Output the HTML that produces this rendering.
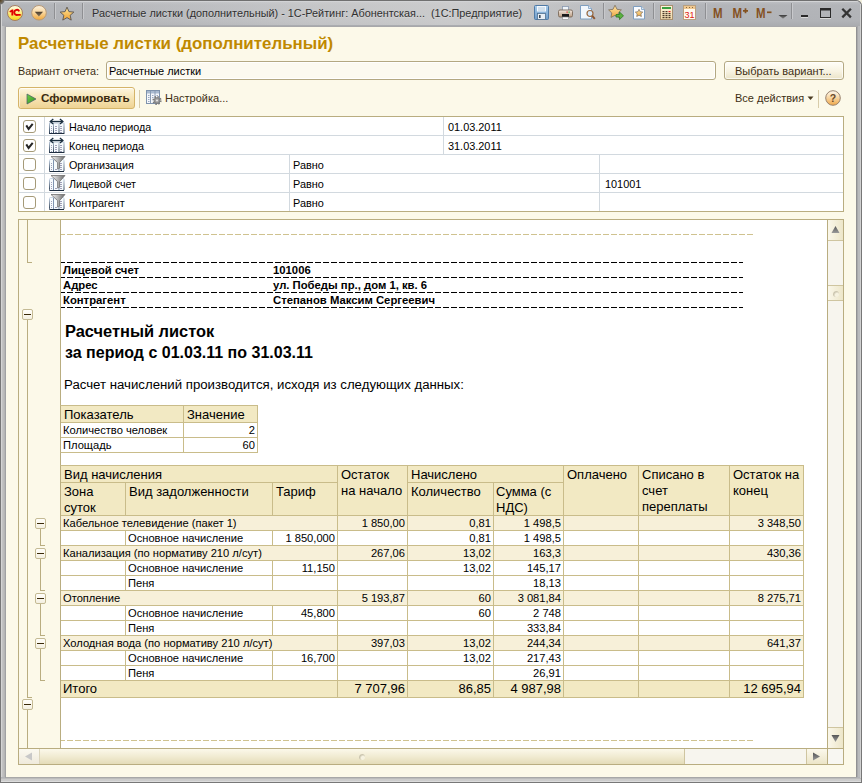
<!DOCTYPE html>
<html><head><meta charset="utf-8">
<style>
*{margin:0;padding:0;box-sizing:border-box}
html,body{width:862px;height:783px;overflow:hidden;background:#f3f0de;font-family:"Liberation Sans",sans-serif}
.a{position:absolute}
.t{position:absolute;white-space:nowrap;font-family:"Liberation Sans",sans-serif;font-size:11px;line-height:13px;color:#000}
#frame{left:0;top:0;width:862px;height:783px;background:#ababab;border-left:1px solid #707070;border-top:1px solid #707070;border-right:1px solid #8a8a8a;border-bottom:1px solid #8a8a8a;border-radius:6px 6px 0 0}
#tbar{left:1px;top:1px;width:860px;height:25px;background:linear-gradient(#d4d5d7 0,#d4d5d7 1px,#bfc1c5 2px,#b4b6ba 5px,#b1b3b7 70%,#aeb0b4 100%);border-radius:5px 5px 0 0}
#client{left:5px;top:26px;width:852px;height:752px;border:1px solid #8c8c8c;background:#fcf9e9}
.sep{position:absolute;width:1px;background:#9a9a9a;border-right:1px solid #cfcfcf}
.hl{position:absolute;height:1px}
.vl{position:absolute;width:1px}
</style></head><body>
<div class="a" style="left:0;top:0;width:862px;height:783px;background:#b1b3b7;border-radius:6px 6px 0 0"></div>
<div class="a" style="left:0;top:0;width:862px;height:783px;border-top:1px solid #707070;border-left:1px solid #777;border-right:1px solid #777;border-bottom:1px solid #777;border-radius:6px 6px 0 0"></div>
<div class="a" style="left:1px;top:1px;width:860px;height:25px;border-radius:5px 5px 0 0;background:linear-gradient(#d2d3d5 0,#d2d3d5 1px,#bcbec2 1px,#b3b5b9 4px,#b1b3b7 20px,#a9abaf 25px)"></div>
<div class="a" style="left:60px;top:2px;width:620px;height:23px;background:linear-gradient(90deg,rgba(212,212,212,0) 0,rgba(212,212,212,.55) 250px,rgba(210,210,210,.75) 390px,rgba(210,210,210,.55) 470px,rgba(212,212,212,0) 620px)"></div>
<div class="a" style="left:1px;top:4px;width:1px;height:773px;background:#d4d4d4"></div>
<div class="a" style="left:2px;top:26px;width:1px;height:751px;background:#c2c2c2"></div>
<div class="a" style="left:3px;top:26px;width:1px;height:751px;background:#bdbdbd"></div>
<div class="a" style="left:4px;top:26px;width:1px;height:751px;background:#b5b5b5"></div>
<div class="a" style="left:5px;top:26px;width:1px;height:752px;background:#a0a1a3"></div>
<div class="a" style="left:856px;top:26px;width:1px;height:752px;background:#909092"></div>
<div class="a" style="left:857px;top:26px;width:1px;height:751px;background:#a8a9ab"></div>
<div class="a" style="left:858px;top:26px;width:2px;height:751px;background:#b9babc"></div>
<div class="a" style="left:860px;top:4px;width:1px;height:778px;background:#d0d0d0"></div>
<div class="a" style="left:5px;top:26px;width:852px;height:1px;background:#a8a8aa"></div>
<div class="a" style="left:6px;top:777px;width:851px;height:1px;background:#a8a8a8"></div>
<div class="a" style="left:1px;top:778px;width:860px;height:1px;background:#bcbcbc"></div>
<div class="a" style="left:1px;top:779px;width:860px;height:2px;background:#cccccc"></div>
<div class="a" style="left:1px;top:781px;width:860px;height:1px;background:#dcdcdc"></div>
<div class="a" style="left:6px;top:27px;width:850px;height:750px;background:#fcf9e9"></div>
<div class="a" style="left:0;top:0;width:5px;height:5px;background:radial-gradient(circle at 0 0,#4a3a20 0,#6a5a40 2px,#707070 4px,transparent 5px)"></div>

<!-- title bar icons -->
<svg class="a" style="left:0;top:0" width="862" height="26">
  <defs>
    <linearGradient id="g1c" x1="0" y1="0" x2="0" y2="1"><stop offset="0" stop-color="#fffdf0"/><stop offset="0.45" stop-color="#fdf08a"/><stop offset="1" stop-color="#f6d410"/></linearGradient>
    <linearGradient id="gdd" x1="0" y1="0" x2="0" y2="1"><stop offset="0" stop-color="#fdf3e0"/><stop offset=".5" stop-color="#f8d49a"/><stop offset="1" stop-color="#f2a838"/></linearGradient><linearGradient id="gddt" x1="0" y1="0" x2="0" y2="1"><stop offset="0" stop-color="#4a3c2c"/><stop offset="1" stop-color="#8a7a60"/></linearGradient>
    <linearGradient id="gst" x1="0" y1="0" x2="0" y2="1"><stop offset="0" stop-color="#ffe79a"/><stop offset="1" stop-color="#f0a030"/></linearGradient>
  </defs>
  <circle cx="15" cy="13" r="7.5" fill="url(#g1c)" stroke="#a57d60" stroke-width="1"/>
  <path d="M9.3 11.2l2.6-1.6h1.4v5.9h-1.9v-3.6l-1.4.7z" fill="#e00000"/>
  <path d="M19.2 11.3a2.6 2.6 0 1 0 -1.6 3.6h3.1" fill="none" stroke="#e00000" stroke-width="1.9"/>
  <circle cx="39" cy="12.8" r="7.3" fill="url(#gdd)" stroke="#b89a78" stroke-width="1"/>
  <path d="M34.8 11.8 h8.2 l-4.1 4.8z" fill="url(#gddt)"/>
  <path d="M67.00 7.10 L68.94 11.63 L73.85 12.08 L70.14 15.32 L71.23 20.12 L67.00 17.60 L62.77 20.12 L63.86 15.32 L60.15 12.08 L65.06 11.63Z" fill="url(#gst)" stroke="#5a5550" stroke-width=".9" stroke-linejoin="round"/>
  <rect x="54" y="3" width="1" height="16" fill="#8e8f92"/><rect x="55" y="3" width="1" height="16" fill="#c8c9cc"/>
  <rect x="82" y="3" width="1" height="16" fill="#8e8f92"/><rect x="83" y="3" width="1" height="16" fill="#c8c9cc"/>
</svg>
<div class="t" style="left:92px;top:6.6px;font-size:10.86px;color:#303030;text-shadow:0 1px 0 rgba(255,255,255,.25)">Расчетные листки (дополнительный) - 1С-Рейтинг: Абонентская...&nbsp; (1С:Предприятие)</div>


<div class="t" style="left:18px;top:35px;font-size:16.9px;line-height:18px;font-weight:700;color:#c08900">Расчетные листки (дополнительный)</div>
<div class="t" style="left:18px;top:65px;font-size:10.8px;color:#3e2f14">Вариант отчета:</div>
<div class="a" style="left:106px;top:61px;width:610px;height:19px;border:1px solid #b3a882;border-radius:3px;background:#fcfaf0;box-shadow:inset 0 0 0 1px #fff"></div>
<div class="t" style="left:109px;top:65px;color:#000">Расчетные листки</div>
<div class="a" style="left:724px;top:61px;width:120px;height:19px;border:1px solid #b3a882;border-radius:3px;background:linear-gradient(#fffef8,#f7f3e2 55%,#ebe4c8);box-shadow:inset 0 0 0 1px rgba(255,255,255,.7)"></div>
<div class="t" style="left:735px;top:65px;color:#3e2f14">Выбрать вариант...</div>
<div class="a" style="left:18px;top:87px;width:117px;height:22px;border:1px solid #d5b469;border-radius:3px;background:linear-gradient(#fdf6e0,#f7e6b8 45%,#efd394);box-shadow:inset 0 1px 0 #fffdf6,inset 1px 0 0 rgba(255,255,255,.5)"></div>
<svg class="a" style="left:26px;top:92.5px" width="11" height="12"><defs><linearGradient id="gpl" x1="0" y1="0" x2="1" y2="1"><stop offset="0" stop-color="#6fcf4a"/><stop offset="1" stop-color="#2e8f1e"/></linearGradient></defs><path d="M1 1 L10 6 L1 11Z" fill="url(#gpl)" stroke="#4a5a6a" stroke-width=".7"/></svg>
<div class="t" style="left:41px;top:91px;font-weight:700;font-size:11.65px;color:#3a2a10">Сформировать</div>
<div class="a" style="left:139px;top:90px;width:1px;height:18px;background:#d8ccaa"></div>
<svg class="a" style="left:146px;top:89px" width="17" height="17">
 <rect x="0.5" y="1.5" width="13" height="13" fill="#f4f7fb" stroke="#7f93ad"/>
 <rect x="1" y="2" width="12" height="2.5" fill="#a9bad0"/>
 <path d="M4.5 2v12M9 2v12" stroke="#8a9cb4"/>
 <path d="M2 6.5h1.5M2 8.5h1.5M2 10.5h1.5M2 12.5h1.5M6 6.5h1.5M6 8.5h1.5M10.5 6.5h1.5" stroke="#9aa8c0"/>
 <circle cx="11" cy="11.5" r="3.6" fill="none" stroke="#7a7a7a" stroke-width="2" stroke-dasharray="1.4 1.43"/>
 <circle cx="11" cy="11.5" r="2.9" fill="#9c9c9c" stroke="#6e6e6e" stroke-width=".6"/>
 <circle cx="11" cy="11.5" r="1.1" fill="#e4e4e4"/>
</svg>
<div class="t" style="left:165px;top:92px;color:#3e2f14">Настройка...</div>
<div class="t" style="left:735px;top:92px;color:#3e2f14">Все действия</div>
<svg class="a" style="left:807px;top:96px" width="7" height="5"><path d="M0.5 0.5h6l-3 3.5z" fill="#4a3b20"/></svg>
<div class="a" style="left:818px;top:90px;width:1px;height:18px;background:#d8ccaa"></div>
<svg class="a" style="left:824px;top:89px" width="18" height="18"><defs><linearGradient id="ghp" x1="0" y1="0" x2="0" y2="1"><stop offset="0" stop-color="#fffaf0"/><stop offset=".45" stop-color="#f8d8a8"/><stop offset="1" stop-color="#f0a848"/></linearGradient></defs><circle cx="9" cy="9" r="7.3" fill="url(#ghp)" stroke="#9a8470" stroke-width="1"/><text x="9" y="12.8" text-anchor="middle" font-family="Liberation Sans" font-weight="700" font-size="10.5" fill="#6a4a2a">?</text></svg>



<svg class="a" style="left:520px;top:0" width="342" height="26">
<defs>
 <linearGradient id="tflop" x1="0" y1="0" x2="0" y2="1"><stop offset="0" stop-color="#a8cbea"/><stop offset="1" stop-color="#6f9cc8"/></linearGradient>
 <linearGradient id="tprn" x1="0" y1="0" x2="0" y2="1"><stop offset="0" stop-color="#f3e9e0"/><stop offset="1" stop-color="#b89a80"/></linearGradient>
 <linearGradient id="tstar" x1="0" y1="0" x2="0" y2="1"><stop offset="0" stop-color="#ffe8a8"/><stop offset="1" stop-color="#eea640"/></linearGradient>
 <linearGradient id="tcalc" x1="0" y1="0" x2="0" y2="1"><stop offset="0" stop-color="#fff4dc"/><stop offset="1" stop-color="#f0d8a8"/></linearGradient>
 <linearGradient id="tarr" x1="0" y1="0" x2="0" y2="1"><stop offset="0" stop-color="#3a3a3a"/><stop offset="1" stop-color="#8a8a8a"/></linearGradient>
</defs>
<!-- floppy 534..549 -->
<g transform="translate(14,0)">
 <rect x="0.5" y="5.5" width="14" height="14" rx="1" fill="url(#tflop)" stroke="#4f7aa6"/>
 <rect x="3" y="6" width="9" height="5.5" fill="#f4f8fc"/>
 <path d="M4 8h7M4 10h7" stroke="#9fbcd8" stroke-width=".8"/>
 <rect x="3.5" y="13.5" width="8" height="6" fill="#e8eef4" stroke="#4f6f90" stroke-width=".8"/>
 <rect x="5" y="15" width="1.6" height="3" fill="#3a4a5a"/>
</g>
<!-- printer 558..573 -->
<g transform="translate(38,0)">
 <rect x="4.5" y="6.5" width="6" height="4" fill="#eef4fa" stroke="#8a9ab0" stroke-width=".8"/>
 <rect x="0.5" y="10" width="14" height="7" rx="1.5" fill="url(#tprn)" stroke="#7a6a5a" stroke-width=".9"/>
 <rect x="8.5" y="11.5" width="1.2" height="1.2" fill="#e02020"/><rect x="10.5" y="11.5" width="1.2" height="1.2" fill="#20b020"/>
 <rect x="4" y="14" width="7" height="3" fill="#1a1a1a"/>
 <rect x="4.5" y="17" width="6" height="2.5" fill="#fafafa" stroke="#8a8a8a" stroke-width=".6"/>
</g>
<!-- preview 580..595 -->
<g transform="translate(60,0)">
 <path d="M0.5 5.5h8l3 3v10.5h-11z" fill="#f2f7fc" stroke="#7f9fc0"/>
 <path d="M8.5 5.5v3h3" fill="#dce8f4" stroke="#7f9fc0" stroke-width=".8"/>
 <circle cx="10" cy="13.5" r="3" fill="#d4e6f8" stroke="#9a6a40" stroke-width="1.2"/>
 <path d="M12.2 15.8l2.6 3" stroke="#8a5530" stroke-width="2"/>
</g>
<rect x="83" y="3" width="1" height="16" fill="#8e8f92"/><rect x="84" y="3" width="1" height="16" fill="#c8c9cc"/>
<!-- star arrow 608..624 -->
<g transform="translate(88,0)">
 <path d="M7 5.2l2 4.1 4.4.6-3.2 3.1.8 4.4L7 15.3l-4 2.1.8-4.4L.6 9.9 5 9.3z" fill="url(#tstar)" stroke="#7c6e5e" stroke-width=".8"/>
 <path d="M8 14.5h3.5v-2.5l4 3.8-4 3.8v-2.6H8z" fill="#5ab040" stroke="#2e7a22" stroke-width=".8"/>
</g>
<!-- doc star 633..645 -->
<g transform="translate(113,0)">
 <path d="M0.5 6.5h8l3 3v9.5h-11z" fill="#fafcff" stroke="#7f9fc0"/>
 <path d="M8.5 6.5v3h3" fill="#dce8f4" stroke="#7f9fc0" stroke-width=".8"/>
 <path d="M6 9.3l1.2 2.4 2.6.4-1.9 1.8.5 2.6L6 15.3l-2.3 1.2.5-2.6-1.9-1.8 2.6-.4z" fill="url(#tstar)" stroke="#7c6e5e" stroke-width=".7"/>
</g>
<rect x="133" y="3" width="1" height="16" fill="#8e8f92"/><rect x="134" y="3" width="1" height="16" fill="#c8c9cc"/>
<!-- calculator 660..673 -->
<g transform="translate(140,0)">
 <rect x="0.5" y="5.5" width="12" height="14" fill="url(#tcalc)" stroke="#a89070"/>
 <rect x="2" y="7" width="9" height="2" fill="#3aa040"/>
 <rect x="2.5" y="11" width="2" height="1.2" fill="#4a3a2a"/><rect x="5.5" y="11" width="2" height="1.2" fill="#4a3a2a"/><rect x="8.5" y="11" width="2" height="1.2" fill="#e02020"/><rect x="2.5" y="13" width="2" height="1.2" fill="#4a3a2a"/><rect x="5.5" y="13" width="2" height="1.2" fill="#4a3a2a"/><rect x="8.5" y="13" width="2" height="1.2" fill="#4a3a2a"/><rect x="2.5" y="15" width="2" height="1.2" fill="#4a3a2a"/><rect x="5.5" y="15" width="2" height="1.2" fill="#4a3a2a"/><rect x="8.5" y="15" width="2" height="1.2" fill="#4a3a2a"/><rect x="2.5" y="17" width="2" height="1.2" fill="#4a3a2a"/><rect x="5.5" y="17" width="2" height="1.2" fill="#4a3a2a"/><rect x="8.5" y="17" width="2" height="1.2" fill="#4a3a2a"/>
</g>
<!-- calendar 683..696 -->
<g transform="translate(163,0)">
 <rect x="0.5" y="5.5" width="12" height="14" fill="#fffaf0" stroke="#b8a080"/>
 <rect x="1" y="6" width="11" height="3" fill="#f0c890"/>
 <path d="M3 7.5h1M6 7.5h1M9 7.5h1" stroke="#8a6a40"/>
 <text x="6.6" y="18.2" text-anchor="middle" font-family="Liberation Sans" font-size="9" font-weight="400" fill="#e02010">31</text>
</g>
<rect x="185" y="3" width="1" height="16" fill="#8e8f92"/><rect x="186" y="3" width="1" height="16" fill="#c8c9cc"/>
<g fill="#84511f" font-family="Liberation Sans" font-weight="700" font-size="11.5">
<text transform="translate(193,17.6) scale(1,1.2)">M</text>
<text transform="translate(212.5,17.6) scale(1,1.2)">M</text>
<path d="M223 10.8h5M225.5 8.3v5" stroke="#84511f" stroke-width="1.7"/>
<text transform="translate(236,17.6) scale(1,1.2)">M</text>
<path d="M247 12.3h4.5" stroke="#84511f" stroke-width="1.7"/>
</g>
<path d="M258.5 15h9l-4.5 3.8z" fill="url(#tarr)"/>
<rect x="271" y="3" width="1" height="16" fill="#8e8f92"/><rect x="272" y="3" width="1" height="16" fill="#c8c9cc"/>
<rect x="281" y="15" width="7" height="2" fill="#2a2a2a"/><rect x="281" y="17" width="7" height="1" fill="#d8d8d8"/>
<rect x="300.5" y="8.5" width="10" height="9" fill="none" stroke="#2a2a2a" stroke-width="1"/>
<rect x="300" y="8" width="11" height="2.5" fill="#2a2a2a"/><rect x="300" y="18" width="11" height="1" fill="#d8d8d8"/>
<path d="M322.3 8.8l8.6 8.6M330.9 8.8L322.3 17.4" stroke="#333" stroke-width="2.3"/>
</svg>
<div class="a" style="left:18px;top:116px;width:826px;height:96px;border:1px solid #b9ad80;background:#fff"></div>
<div class="a" style="left:19px;top:135px;width:824px;height:1px;background:#d2d9df"></div>
<div class="a" style="left:19px;top:154px;width:824px;height:1px;background:#d2d9df"></div>
<div class="a" style="left:19px;top:173px;width:824px;height:1px;background:#d2d9df"></div>
<div class="a" style="left:19px;top:192px;width:824px;height:1px;background:#d2d9df"></div>
<div class="a" style="left:44px;top:117px;width:1px;height:94px;background:#d2d9df"></div>
<div class="a" style="left:443px;top:117px;width:1px;height:37px;background:#d2d9df"></div>
<div class="a" style="left:289px;top:155px;width:1px;height:56px;background:#d2d9df"></div>
<div class="a" style="left:599px;top:155px;width:1px;height:56px;background:#d2d9df"></div>
<svg width="0" height="0" style="position:absolute"><defs>
<linearGradient id="gfun" gradientUnits="userSpaceOnUse" x1="2" y1="0" x2="16" y2="0"><stop offset="0" stop-color="#f4f4f4"/><stop offset=".45" stop-color="#bdbdbd"/><stop offset="1" stop-color="#6a6a6a"/></linearGradient>
<linearGradient id="gtbl" gradientUnits="userSpaceOnUse" x1="0" y1="5" x2="0" y2="17"><stop offset="0" stop-color="#c8d6e6"/><stop offset="1" stop-color="#24364c"/></linearGradient>
</defs></svg>
<div class="a" style="left:23px;top:120px;width:13px;height:13px;border:1px solid #a59a78;border-radius:3px;background:#fff"></div>
<svg class="a" style="left:23px;top:120px" width="13" height="13"><path d="M3.3 5.4 L5.6 9 L9.7 3.9" fill="none" stroke="#262626" stroke-width="2"/></svg>
<svg class="a" style="left:49px;top:117px" width="16" height="18">
 <rect x="0.5" y="6" width="14.5" height="10.5" fill="#f6fbfd" stroke="url(#gtbl)"/>
 <path d="M4.5 7v9M10 7v9" stroke="url(#gtbl)" stroke-width="1"/>
 <path d="M0.5 16.5h14.5" stroke="#1e2e40"/>
 <path d="M2 9.5h1M2 11.5h1M2 13.5h1M2 15.5h1M6 9.5h2M6 11.5h2M6 13.5h2M6 15.5h2M11 9.5h2M11 11.5h2M11 13.5h2M11 15.5h2" stroke="#a0a0b8"/>
 <path d="M1.3 4.5h12.6" stroke="#1a2e3e" stroke-width="1.3"/>
 <path d="M4.3 2L1.3 4.5L4.3 7M10.9 2L13.9 4.5L10.9 7" stroke="#1a2e3e" stroke-width="1.3" fill="none"/>
</svg>
<div class="t" style="left:69px;top:121px;font-size:10.75px">Начало периода</div>
<div class="t" style="left:448px;top:121px;font-size:10.9px">01.03.2011</div>
<div class="a" style="left:23px;top:139px;width:13px;height:13px;border:1px solid #a59a78;border-radius:3px;background:#fff"></div>
<svg class="a" style="left:23px;top:139px" width="13" height="13"><path d="M3.3 5.4 L5.6 9 L9.7 3.9" fill="none" stroke="#262626" stroke-width="2"/></svg>
<svg class="a" style="left:49px;top:136px" width="16" height="18">
 <rect x="0.5" y="6" width="14.5" height="10.5" fill="#f6fbfd" stroke="url(#gtbl)"/>
 <path d="M4.5 7v9M10 7v9" stroke="url(#gtbl)" stroke-width="1"/>
 <path d="M0.5 16.5h14.5" stroke="#1e2e40"/>
 <path d="M2 9.5h1M2 11.5h1M2 13.5h1M2 15.5h1M6 9.5h2M6 11.5h2M6 13.5h2M6 15.5h2M11 9.5h2M11 11.5h2M11 13.5h2M11 15.5h2" stroke="#a0a0b8"/>
 <path d="M1.3 4.5h12.6" stroke="#1a2e3e" stroke-width="1.3"/>
 <path d="M4.3 2L1.3 4.5L4.3 7M10.9 2L13.9 4.5L10.9 7" stroke="#1a2e3e" stroke-width="1.3" fill="none"/>
</svg>
<div class="t" style="left:69px;top:140px;font-size:10.75px">Конец периода</div>
<div class="t" style="left:448px;top:140px;font-size:10.9px">31.03.2011</div>
<div class="a" style="left:23px;top:158px;width:13px;height:13px;border:1px solid #a59a78;border-radius:3px;background:#fff"></div>
<svg class="a" style="left:49px;top:155px" width="17" height="18">
 <rect x="0.5" y="4.5" width="14.5" height="12" rx="1" fill="#f6fbfd" stroke="url(#gtbl)"/>
 <path d="M0.5 16.5h14.5" stroke="#1e2e40"/>
 <path d="M4.5 5v11M10 5v11" stroke="#7f94b0"/>
 <path d="M2 8.5h1M2 10.5h1M2 12.5h1M2 14.5h1M6 14.5h2M11 8.5h2M11 10.5h2M11 12.5h2M11 14.5h2" stroke="#a0a0b8"/>
 <path d="M2 1.5h14L10.6 7.6v5.6l-2 .9V7.6z" fill="url(#gfun)" stroke="#6e6e6e" stroke-width=".8"/>
</svg>
<div class="t" style="left:69px;top:159px;font-size:10.75px">Организация</div>
<div class="t" style="left:293px;top:159px;font-size:10.9px">Равно</div>
<div class="a" style="left:23px;top:177px;width:13px;height:13px;border:1px solid #a59a78;border-radius:3px;background:#fff"></div>
<svg class="a" style="left:49px;top:174px" width="17" height="18">
 <rect x="0.5" y="4.5" width="14.5" height="12" rx="1" fill="#f6fbfd" stroke="url(#gtbl)"/>
 <path d="M0.5 16.5h14.5" stroke="#1e2e40"/>
 <path d="M4.5 5v11M10 5v11" stroke="#7f94b0"/>
 <path d="M2 8.5h1M2 10.5h1M2 12.5h1M2 14.5h1M6 14.5h2M11 8.5h2M11 10.5h2M11 12.5h2M11 14.5h2" stroke="#a0a0b8"/>
 <path d="M2 1.5h14L10.6 7.6v5.6l-2 .9V7.6z" fill="url(#gfun)" stroke="#6e6e6e" stroke-width=".8"/>
</svg>
<div class="t" style="left:69px;top:178px;font-size:10.75px">Лицевой счет</div>
<div class="t" style="left:293px;top:178px;font-size:10.9px">Равно</div>
<div class="t" style="left:605px;top:178px;font-size:10.9px">101001</div>
<div class="a" style="left:23px;top:196px;width:13px;height:13px;border:1px solid #a59a78;border-radius:3px;background:#fff"></div>
<svg class="a" style="left:49px;top:193px" width="17" height="18">
 <rect x="0.5" y="4.5" width="14.5" height="12" rx="1" fill="#f6fbfd" stroke="url(#gtbl)"/>
 <path d="M0.5 16.5h14.5" stroke="#1e2e40"/>
 <path d="M4.5 5v11M10 5v11" stroke="#7f94b0"/>
 <path d="M2 8.5h1M2 10.5h1M2 12.5h1M2 14.5h1M6 14.5h2M11 8.5h2M11 10.5h2M11 12.5h2M11 14.5h2" stroke="#a0a0b8"/>
 <path d="M2 1.5h14L10.6 7.6v5.6l-2 .9V7.6z" fill="url(#gfun)" stroke="#6e6e6e" stroke-width=".8"/>
</svg>
<div class="t" style="left:69px;top:197px;font-size:10.75px">Контрагент</div>
<div class="t" style="left:293px;top:197px;font-size:10.9px">Равно</div>
<div class="a" style="left:18px;top:219px;width:826px;height:546px;border:1px solid #b9ad80;background:#fff"></div>
<div class="a" style="left:19px;top:220px;width:41px;height:528px;background:#fcf9e9"></div>
<div class="a" style="left:60px;top:220px;width:1px;height:528px;background:#b9ad80"></div>
<div class="a" style="left:61px;top:234px;width:692px;height:1px;background:linear-gradient(90deg,#cfc28f 6px,transparent 6px) 6px 0/8px 1px repeat-x"></div>
<div class="a" style="left:61px;top:740px;width:692px;height:1px;background:linear-gradient(90deg,#cfc28f 6px,transparent 6px) 6px 0/8px 1px repeat-x"></div>
<div class="a" style="left:61px;top:262px;width:682px;height:1px;background:linear-gradient(90deg,#000 6px,transparent 6px) 6px 0/8px 1px repeat-x"></div>
<div class="a" style="left:61px;top:277px;width:682px;height:1px;background:linear-gradient(90deg,#000 6px,transparent 6px) 6px 0/8px 1px repeat-x"></div>
<div class="a" style="left:61px;top:292px;width:682px;height:1px;background:linear-gradient(90deg,#000 6px,transparent 6px) 6px 0/8px 1px repeat-x"></div>
<div class="a" style="left:61px;top:307px;width:682px;height:1px;background:linear-gradient(90deg,#000 6px,transparent 6px) 6px 0/8px 1px repeat-x"></div>
<div class="t" style="left:63px;top:264px;font-size:11.15px;font-weight:700;font-size:11.3px">Лицевой счет</div>
<div class="t" style="left:273px;top:264px;font-size:11.15px;font-weight:700;font-size:11.3px">101006</div>
<div class="t" style="left:63px;top:279px;font-size:11.15px;font-weight:700;font-size:11.3px">Адрес</div>
<div class="t" style="left:273px;top:279px;font-size:11.15px;font-weight:700;font-size:11.3px">ул. Победы пр., дом 1, кв. 6</div>
<div class="t" style="left:63px;top:294px;font-size:11.15px;font-weight:700;font-size:11.3px">Контрагент</div>
<div class="t" style="left:273px;top:294px;font-size:11.15px;font-weight:700;font-size:11.3px">Степанов Максим Сергеевич</div>
<div class="t" style="left:65px;top:322px;font-size:11.15px;font-weight:700;font-size:16.42px;line-height:18px">Расчетный листок</div>
<div class="t" style="left:65px;top:344px;font-size:11.15px;font-weight:700;font-size:16px;line-height:18px">за период с 01.03.11 по 31.03.11</div>
<div class="t" style="left:64px;top:377px;font-size:11.15px;font-size:13.23px;line-height:15px">Расчет начислений производится, исходя из следующих данных:</div>
<div class="a" style="left:60px;top:405px;width:198px;height:48px;border:1px solid #c9bc8a;border-left-color:#b9ad80"></div>
<div class="a" style="left:61px;top:406px;width:196px;height:16px;background:#f2e9c3"></div>
<div class="a" style="left:61px;top:422px;width:196px;height:1px;background:#c9bc8a"></div>
<div class="a" style="left:61px;top:437px;width:196px;height:1px;background:#c9bc8a"></div>
<div class="a" style="left:183px;top:406px;width:1px;height:46px;background:#c9bc8a"></div>
<div class="t" style="left:64px;top:407px;font-size:11.15px;font-size:13px;line-height:15px">Показатель</div>
<div class="t" style="left:187px;top:407px;font-size:11.15px;font-size:13px;line-height:15px">Значение</div>
<div class="t" style="left:63px;top:424px;font-size:11.15px;">Количество человек</div>
<div class="t" style="left:-45px;width:300px;text-align:right;top:424px;font-size:11.15px;">2</div>
<div class="t" style="left:63px;top:439px;font-size:11.15px;">Площадь</div>
<div class="t" style="left:-45px;width:300px;text-align:right;top:439px;font-size:11.15px;">60</div>
<div class="a" style="left:60px;top:465px;width:744px;height:233px;border:1px solid #c9bc8a;border-left-color:#b9ad80"></div>
<div class="a" style="left:61px;top:466px;width:742px;height:49px;background:#f2e9c3"></div>
<div class="a" style="left:61px;top:482px;width:276px;height:1px;background:#c9bc8a"></div>
<div class="a" style="left:408px;top:482px;width:155px;height:1px;background:#c9bc8a"></div>
<div class="a" style="left:61px;top:515px;width:742px;height:1px;background:#c9bc8a"></div>
<div class="a" style="left:125px;top:483px;width:1px;height:32px;background:#c9bc8a"></div>
<div class="a" style="left:272px;top:483px;width:1px;height:32px;background:#c9bc8a"></div>
<div class="a" style="left:493px;top:483px;width:1px;height:32px;background:#c9bc8a"></div>
<div class="a" style="left:337px;top:466px;width:1px;height:231px;background:#c9bc8a"></div>
<div class="a" style="left:407px;top:466px;width:1px;height:231px;background:#c9bc8a"></div>
<div class="a" style="left:563px;top:466px;width:1px;height:231px;background:#c9bc8a"></div>
<div class="a" style="left:638px;top:466px;width:1px;height:231px;background:#c9bc8a"></div>
<div class="a" style="left:729px;top:466px;width:1px;height:231px;background:#c9bc8a"></div>
<div class="t" style="left:64px;top:467px;font-size:11.15px;font-size:13px;line-height:15px">Вид начисления</div>
<div class="t" style="left:64px;top:484px;font-size:11.15px;font-size:13px;line-height:15px;line-height:16px">Зона<br>суток</div>
<div class="t" style="left:129px;top:484px;font-size:11.15px;font-size:13px;line-height:15px">Вид задолженности</div>
<div class="t" style="left:276px;top:484px;font-size:11.15px;font-size:13px;line-height:15px">Тариф</div>
<div class="t" style="left:341px;top:467px;font-size:11.15px;font-size:13px;line-height:15px;line-height:16px">Остаток<br>на начало</div>
<div class="t" style="left:411px;top:467px;font-size:11.15px;font-size:13px;line-height:15px">Начислено</div>
<div class="t" style="left:411px;top:484px;font-size:11.15px;font-size:13px;line-height:15px">Количество</div>
<div class="t" style="left:496px;top:484px;font-size:11.15px;font-size:13px;line-height:15px;line-height:16px">Сумма (с<br>НДС)</div>
<div class="t" style="left:567px;top:467px;font-size:11.15px;font-size:13px;line-height:15px">Оплачено</div>
<div class="t" style="left:642px;top:467px;font-size:11.15px;font-size:13px;line-height:15px;line-height:16px">Списано в<br>счет<br>переплаты</div>
<div class="t" style="left:733px;top:467px;font-size:11.15px;font-size:13px;line-height:15px;line-height:16px">Остаток на<br>конец</div>
<div class="a" style="left:61px;top:516px;width:742px;height:14px;background:#f7f0d9"></div>
<div class="t" style="left:63px;top:517px;font-size:11.15px;">Кабельное телевидение (пакет 1)</div>
<div class="t" style="left:105px;width:300px;text-align:right;top:517px;font-size:11.15px;">1 850,00</div>
<div class="t" style="left:191px;width:300px;text-align:right;top:517px;font-size:11.15px;">0,81</div>
<div class="t" style="left:261px;width:300px;text-align:right;top:517px;font-size:11.15px;">1 498,5</div>
<div class="t" style="left:501px;width:300px;text-align:right;top:517px;font-size:11.15px;">3 348,50</div>
<div class="a" style="left:61px;top:530px;width:742px;height:1px;background:#c9bc8a"></div>
<div class="a" style="left:493px;top:516px;width:1px;height:14px;background:#c9bc8a"></div>
<div class="a" style="left:337px;top:516px;width:1px;height:14px;background:#c9bc8a"></div>
<div class="a" style="left:407px;top:516px;width:1px;height:14px;background:#c9bc8a"></div>
<div class="a" style="left:563px;top:516px;width:1px;height:14px;background:#c9bc8a"></div>
<div class="a" style="left:638px;top:516px;width:1px;height:14px;background:#c9bc8a"></div>
<div class="a" style="left:729px;top:516px;width:1px;height:14px;background:#c9bc8a"></div>
<div class="t" style="left:128px;top:532px;font-size:11.15px;">Основное начисление</div>
<div class="t" style="left:35px;width:300px;text-align:right;top:532px;font-size:11.15px;">1 850,000</div>
<div class="t" style="left:105px;width:300px;text-align:right;top:532px;font-size:11.15px;"></div>
<div class="t" style="left:191px;width:300px;text-align:right;top:532px;font-size:11.15px;">0,81</div>
<div class="t" style="left:261px;width:300px;text-align:right;top:532px;font-size:11.15px;">1 498,5</div>
<div class="t" style="left:501px;width:300px;text-align:right;top:532px;font-size:11.15px;"></div>
<div class="a" style="left:61px;top:545px;width:742px;height:1px;background:#c9bc8a"></div>
<div class="a" style="left:125px;top:531px;width:1px;height:14px;background:#c9bc8a"></div>
<div class="a" style="left:272px;top:531px;width:1px;height:14px;background:#c9bc8a"></div>
<div class="a" style="left:493px;top:531px;width:1px;height:14px;background:#c9bc8a"></div>
<div class="a" style="left:337px;top:531px;width:1px;height:14px;background:#c9bc8a"></div>
<div class="a" style="left:407px;top:531px;width:1px;height:14px;background:#c9bc8a"></div>
<div class="a" style="left:563px;top:531px;width:1px;height:14px;background:#c9bc8a"></div>
<div class="a" style="left:638px;top:531px;width:1px;height:14px;background:#c9bc8a"></div>
<div class="a" style="left:729px;top:531px;width:1px;height:14px;background:#c9bc8a"></div>
<div class="a" style="left:61px;top:546px;width:742px;height:14px;background:#f7f0d9"></div>
<div class="t" style="left:63px;top:547px;font-size:11.15px;">Канализация (по нормативу 210 л/сут)</div>
<div class="t" style="left:105px;width:300px;text-align:right;top:547px;font-size:11.15px;">267,06</div>
<div class="t" style="left:191px;width:300px;text-align:right;top:547px;font-size:11.15px;">13,02</div>
<div class="t" style="left:261px;width:300px;text-align:right;top:547px;font-size:11.15px;">163,3</div>
<div class="t" style="left:501px;width:300px;text-align:right;top:547px;font-size:11.15px;">430,36</div>
<div class="a" style="left:61px;top:560px;width:742px;height:1px;background:#c9bc8a"></div>
<div class="a" style="left:493px;top:546px;width:1px;height:14px;background:#c9bc8a"></div>
<div class="a" style="left:337px;top:546px;width:1px;height:14px;background:#c9bc8a"></div>
<div class="a" style="left:407px;top:546px;width:1px;height:14px;background:#c9bc8a"></div>
<div class="a" style="left:563px;top:546px;width:1px;height:14px;background:#c9bc8a"></div>
<div class="a" style="left:638px;top:546px;width:1px;height:14px;background:#c9bc8a"></div>
<div class="a" style="left:729px;top:546px;width:1px;height:14px;background:#c9bc8a"></div>
<div class="t" style="left:128px;top:562px;font-size:11.15px;">Основное начисление</div>
<div class="t" style="left:35px;width:300px;text-align:right;top:562px;font-size:11.15px;">11,150</div>
<div class="t" style="left:105px;width:300px;text-align:right;top:562px;font-size:11.15px;"></div>
<div class="t" style="left:191px;width:300px;text-align:right;top:562px;font-size:11.15px;">13,02</div>
<div class="t" style="left:261px;width:300px;text-align:right;top:562px;font-size:11.15px;">145,17</div>
<div class="t" style="left:501px;width:300px;text-align:right;top:562px;font-size:11.15px;"></div>
<div class="a" style="left:61px;top:575px;width:742px;height:1px;background:#c9bc8a"></div>
<div class="a" style="left:125px;top:561px;width:1px;height:14px;background:#c9bc8a"></div>
<div class="a" style="left:272px;top:561px;width:1px;height:14px;background:#c9bc8a"></div>
<div class="a" style="left:493px;top:561px;width:1px;height:14px;background:#c9bc8a"></div>
<div class="a" style="left:337px;top:561px;width:1px;height:14px;background:#c9bc8a"></div>
<div class="a" style="left:407px;top:561px;width:1px;height:14px;background:#c9bc8a"></div>
<div class="a" style="left:563px;top:561px;width:1px;height:14px;background:#c9bc8a"></div>
<div class="a" style="left:638px;top:561px;width:1px;height:14px;background:#c9bc8a"></div>
<div class="a" style="left:729px;top:561px;width:1px;height:14px;background:#c9bc8a"></div>
<div class="t" style="left:128px;top:577px;font-size:11.15px;">Пеня</div>
<div class="t" style="left:35px;width:300px;text-align:right;top:577px;font-size:11.15px;"></div>
<div class="t" style="left:105px;width:300px;text-align:right;top:577px;font-size:11.15px;"></div>
<div class="t" style="left:191px;width:300px;text-align:right;top:577px;font-size:11.15px;"></div>
<div class="t" style="left:261px;width:300px;text-align:right;top:577px;font-size:11.15px;">18,13</div>
<div class="t" style="left:501px;width:300px;text-align:right;top:577px;font-size:11.15px;"></div>
<div class="a" style="left:61px;top:590px;width:742px;height:1px;background:#c9bc8a"></div>
<div class="a" style="left:125px;top:576px;width:1px;height:14px;background:#c9bc8a"></div>
<div class="a" style="left:272px;top:576px;width:1px;height:14px;background:#c9bc8a"></div>
<div class="a" style="left:493px;top:576px;width:1px;height:14px;background:#c9bc8a"></div>
<div class="a" style="left:337px;top:576px;width:1px;height:14px;background:#c9bc8a"></div>
<div class="a" style="left:407px;top:576px;width:1px;height:14px;background:#c9bc8a"></div>
<div class="a" style="left:563px;top:576px;width:1px;height:14px;background:#c9bc8a"></div>
<div class="a" style="left:638px;top:576px;width:1px;height:14px;background:#c9bc8a"></div>
<div class="a" style="left:729px;top:576px;width:1px;height:14px;background:#c9bc8a"></div>
<div class="a" style="left:61px;top:591px;width:742px;height:14px;background:#f7f0d9"></div>
<div class="t" style="left:63px;top:592px;font-size:11.15px;">Отопление</div>
<div class="t" style="left:105px;width:300px;text-align:right;top:592px;font-size:11.15px;">5 193,87</div>
<div class="t" style="left:191px;width:300px;text-align:right;top:592px;font-size:11.15px;">60</div>
<div class="t" style="left:261px;width:300px;text-align:right;top:592px;font-size:11.15px;">3 081,84</div>
<div class="t" style="left:501px;width:300px;text-align:right;top:592px;font-size:11.15px;">8 275,71</div>
<div class="a" style="left:61px;top:605px;width:742px;height:1px;background:#c9bc8a"></div>
<div class="a" style="left:493px;top:591px;width:1px;height:14px;background:#c9bc8a"></div>
<div class="a" style="left:337px;top:591px;width:1px;height:14px;background:#c9bc8a"></div>
<div class="a" style="left:407px;top:591px;width:1px;height:14px;background:#c9bc8a"></div>
<div class="a" style="left:563px;top:591px;width:1px;height:14px;background:#c9bc8a"></div>
<div class="a" style="left:638px;top:591px;width:1px;height:14px;background:#c9bc8a"></div>
<div class="a" style="left:729px;top:591px;width:1px;height:14px;background:#c9bc8a"></div>
<div class="t" style="left:128px;top:607px;font-size:11.15px;">Основное начисление</div>
<div class="t" style="left:35px;width:300px;text-align:right;top:607px;font-size:11.15px;">45,800</div>
<div class="t" style="left:105px;width:300px;text-align:right;top:607px;font-size:11.15px;"></div>
<div class="t" style="left:191px;width:300px;text-align:right;top:607px;font-size:11.15px;">60</div>
<div class="t" style="left:261px;width:300px;text-align:right;top:607px;font-size:11.15px;">2 748</div>
<div class="t" style="left:501px;width:300px;text-align:right;top:607px;font-size:11.15px;"></div>
<div class="a" style="left:61px;top:620px;width:742px;height:1px;background:#c9bc8a"></div>
<div class="a" style="left:125px;top:606px;width:1px;height:14px;background:#c9bc8a"></div>
<div class="a" style="left:272px;top:606px;width:1px;height:14px;background:#c9bc8a"></div>
<div class="a" style="left:493px;top:606px;width:1px;height:14px;background:#c9bc8a"></div>
<div class="a" style="left:337px;top:606px;width:1px;height:14px;background:#c9bc8a"></div>
<div class="a" style="left:407px;top:606px;width:1px;height:14px;background:#c9bc8a"></div>
<div class="a" style="left:563px;top:606px;width:1px;height:14px;background:#c9bc8a"></div>
<div class="a" style="left:638px;top:606px;width:1px;height:14px;background:#c9bc8a"></div>
<div class="a" style="left:729px;top:606px;width:1px;height:14px;background:#c9bc8a"></div>
<div class="t" style="left:128px;top:622px;font-size:11.15px;">Пеня</div>
<div class="t" style="left:35px;width:300px;text-align:right;top:622px;font-size:11.15px;"></div>
<div class="t" style="left:105px;width:300px;text-align:right;top:622px;font-size:11.15px;"></div>
<div class="t" style="left:191px;width:300px;text-align:right;top:622px;font-size:11.15px;"></div>
<div class="t" style="left:261px;width:300px;text-align:right;top:622px;font-size:11.15px;">333,84</div>
<div class="t" style="left:501px;width:300px;text-align:right;top:622px;font-size:11.15px;"></div>
<div class="a" style="left:61px;top:635px;width:742px;height:1px;background:#c9bc8a"></div>
<div class="a" style="left:125px;top:621px;width:1px;height:14px;background:#c9bc8a"></div>
<div class="a" style="left:272px;top:621px;width:1px;height:14px;background:#c9bc8a"></div>
<div class="a" style="left:493px;top:621px;width:1px;height:14px;background:#c9bc8a"></div>
<div class="a" style="left:337px;top:621px;width:1px;height:14px;background:#c9bc8a"></div>
<div class="a" style="left:407px;top:621px;width:1px;height:14px;background:#c9bc8a"></div>
<div class="a" style="left:563px;top:621px;width:1px;height:14px;background:#c9bc8a"></div>
<div class="a" style="left:638px;top:621px;width:1px;height:14px;background:#c9bc8a"></div>
<div class="a" style="left:729px;top:621px;width:1px;height:14px;background:#c9bc8a"></div>
<div class="a" style="left:61px;top:636px;width:742px;height:14px;background:#f7f0d9"></div>
<div class="t" style="left:63px;top:637px;font-size:11.15px;">Холодная вода (по нормативу 210 л/сут)</div>
<div class="t" style="left:105px;width:300px;text-align:right;top:637px;font-size:11.15px;">397,03</div>
<div class="t" style="left:191px;width:300px;text-align:right;top:637px;font-size:11.15px;">13,02</div>
<div class="t" style="left:261px;width:300px;text-align:right;top:637px;font-size:11.15px;">244,34</div>
<div class="t" style="left:501px;width:300px;text-align:right;top:637px;font-size:11.15px;">641,37</div>
<div class="a" style="left:61px;top:650px;width:742px;height:1px;background:#c9bc8a"></div>
<div class="a" style="left:493px;top:636px;width:1px;height:14px;background:#c9bc8a"></div>
<div class="a" style="left:337px;top:636px;width:1px;height:14px;background:#c9bc8a"></div>
<div class="a" style="left:407px;top:636px;width:1px;height:14px;background:#c9bc8a"></div>
<div class="a" style="left:563px;top:636px;width:1px;height:14px;background:#c9bc8a"></div>
<div class="a" style="left:638px;top:636px;width:1px;height:14px;background:#c9bc8a"></div>
<div class="a" style="left:729px;top:636px;width:1px;height:14px;background:#c9bc8a"></div>
<div class="t" style="left:128px;top:652px;font-size:11.15px;">Основное начисление</div>
<div class="t" style="left:35px;width:300px;text-align:right;top:652px;font-size:11.15px;">16,700</div>
<div class="t" style="left:105px;width:300px;text-align:right;top:652px;font-size:11.15px;"></div>
<div class="t" style="left:191px;width:300px;text-align:right;top:652px;font-size:11.15px;">13,02</div>
<div class="t" style="left:261px;width:300px;text-align:right;top:652px;font-size:11.15px;">217,43</div>
<div class="t" style="left:501px;width:300px;text-align:right;top:652px;font-size:11.15px;"></div>
<div class="a" style="left:61px;top:665px;width:742px;height:1px;background:#c9bc8a"></div>
<div class="a" style="left:125px;top:651px;width:1px;height:14px;background:#c9bc8a"></div>
<div class="a" style="left:272px;top:651px;width:1px;height:14px;background:#c9bc8a"></div>
<div class="a" style="left:493px;top:651px;width:1px;height:14px;background:#c9bc8a"></div>
<div class="a" style="left:337px;top:651px;width:1px;height:14px;background:#c9bc8a"></div>
<div class="a" style="left:407px;top:651px;width:1px;height:14px;background:#c9bc8a"></div>
<div class="a" style="left:563px;top:651px;width:1px;height:14px;background:#c9bc8a"></div>
<div class="a" style="left:638px;top:651px;width:1px;height:14px;background:#c9bc8a"></div>
<div class="a" style="left:729px;top:651px;width:1px;height:14px;background:#c9bc8a"></div>
<div class="t" style="left:128px;top:667px;font-size:11.15px;">Пеня</div>
<div class="t" style="left:35px;width:300px;text-align:right;top:667px;font-size:11.15px;"></div>
<div class="t" style="left:105px;width:300px;text-align:right;top:667px;font-size:11.15px;"></div>
<div class="t" style="left:191px;width:300px;text-align:right;top:667px;font-size:11.15px;"></div>
<div class="t" style="left:261px;width:300px;text-align:right;top:667px;font-size:11.15px;">26,91</div>
<div class="t" style="left:501px;width:300px;text-align:right;top:667px;font-size:11.15px;"></div>
<div class="a" style="left:61px;top:680px;width:742px;height:1px;background:#c9bc8a"></div>
<div class="a" style="left:125px;top:666px;width:1px;height:14px;background:#c9bc8a"></div>
<div class="a" style="left:272px;top:666px;width:1px;height:14px;background:#c9bc8a"></div>
<div class="a" style="left:493px;top:666px;width:1px;height:14px;background:#c9bc8a"></div>
<div class="a" style="left:337px;top:666px;width:1px;height:14px;background:#c9bc8a"></div>
<div class="a" style="left:407px;top:666px;width:1px;height:14px;background:#c9bc8a"></div>
<div class="a" style="left:563px;top:666px;width:1px;height:14px;background:#c9bc8a"></div>
<div class="a" style="left:638px;top:666px;width:1px;height:14px;background:#c9bc8a"></div>
<div class="a" style="left:729px;top:666px;width:1px;height:14px;background:#c9bc8a"></div>
<div class="a" style="left:61px;top:681px;width:742px;height:16px;background:#f2e9c3"></div>
<div class="a" style="left:337px;top:681px;width:1px;height:16px;background:#c9bc8a"></div>
<div class="a" style="left:407px;top:681px;width:1px;height:16px;background:#c9bc8a"></div>
<div class="a" style="left:493px;top:681px;width:1px;height:16px;background:#c9bc8a"></div>
<div class="a" style="left:563px;top:681px;width:1px;height:16px;background:#c9bc8a"></div>
<div class="a" style="left:638px;top:681px;width:1px;height:16px;background:#c9bc8a"></div>
<div class="a" style="left:729px;top:681px;width:1px;height:16px;background:#c9bc8a"></div>
<div class="t" style="left:63px;top:681px;font-size:11.15px;font-size:13px;line-height:15px">Итого</div>
<div class="t" style="left:105px;width:300px;text-align:right;top:681px;font-size:11.15px;font-size:13px;line-height:15px">7 707,96</div>
<div class="t" style="left:191px;width:300px;text-align:right;top:681px;font-size:11.15px;font-size:13px;line-height:15px">86,85</div>
<div class="t" style="left:261px;width:300px;text-align:right;top:681px;font-size:11.15px;font-size:13px;line-height:15px">4 987,98</div>
<div class="t" style="left:501px;width:300px;text-align:right;top:681px;font-size:11.15px;font-size:13px;line-height:15px">12 695,94</div>
<div class="a" style="left:27px;top:220px;width:1px;height:43px;background:#b9ad80"></div>
<div class="a" style="left:27px;top:262px;width:5px;height:1px;background:#b9ad80"></div>
<div class="a" style="left:22px;top:309px;width:11px;height:11px;border:1px solid #c4ba94;border-radius:2px;background:linear-gradient(#fffefa,#fbf8ee 50%,#f3efe0)"></div>
<div class="a" style="left:24px;top:314px;width:7px;height:1px;background:#3a2a08"></div>
<div class="a" style="left:27px;top:320px;width:1px;height:378px;background:#b9ad80"></div>
<div class="a" style="left:27px;top:697px;width:5px;height:1px;background:#b9ad80"></div>
<div class="a" style="left:22px;top:699px;width:11px;height:11px;border:1px solid #c4ba94;border-radius:2px;background:linear-gradient(#fffefa,#fbf8ee 50%,#f3efe0)"></div>
<div class="a" style="left:24px;top:704px;width:7px;height:1px;background:#3a2a08"></div>
<div class="a" style="left:27px;top:710px;width:1px;height:38px;background:#b9ad80"></div>
<div class="a" style="left:35px;top:518px;width:11px;height:11px;border:1px solid #c4ba94;border-radius:2px;background:linear-gradient(#fffefa,#fbf8ee 50%,#f3efe0)"></div>
<div class="a" style="left:37px;top:523px;width:7px;height:1px;background:#3a2a08"></div>
<div class="a" style="left:40px;top:529px;width:1px;height:17px;background:#b9ad80"></div>
<div class="a" style="left:40px;top:545px;width:5px;height:1px;background:#b9ad80"></div>
<div class="a" style="left:35px;top:548px;width:11px;height:11px;border:1px solid #c4ba94;border-radius:2px;background:linear-gradient(#fffefa,#fbf8ee 50%,#f3efe0)"></div>
<div class="a" style="left:37px;top:553px;width:7px;height:1px;background:#3a2a08"></div>
<div class="a" style="left:40px;top:559px;width:1px;height:32px;background:#b9ad80"></div>
<div class="a" style="left:40px;top:590px;width:5px;height:1px;background:#b9ad80"></div>
<div class="a" style="left:35px;top:593px;width:11px;height:11px;border:1px solid #c4ba94;border-radius:2px;background:linear-gradient(#fffefa,#fbf8ee 50%,#f3efe0)"></div>
<div class="a" style="left:37px;top:598px;width:7px;height:1px;background:#3a2a08"></div>
<div class="a" style="left:40px;top:604px;width:1px;height:32px;background:#b9ad80"></div>
<div class="a" style="left:40px;top:635px;width:5px;height:1px;background:#b9ad80"></div>
<div class="a" style="left:35px;top:638px;width:11px;height:11px;border:1px solid #c4ba94;border-radius:2px;background:linear-gradient(#fffefa,#fbf8ee 50%,#f3efe0)"></div>
<div class="a" style="left:37px;top:643px;width:7px;height:1px;background:#3a2a08"></div>
<div class="a" style="left:40px;top:649px;width:1px;height:32px;background:#b9ad80"></div>
<div class="a" style="left:40px;top:680px;width:5px;height:1px;background:#b9ad80"></div>
<div class="a" style="left:827px;top:220px;width:1px;height:528px;background:#b9ad80"></div>
<div class="a" style="left:828px;top:220px;width:15px;height:528px;background:#f7f5ee"></div>
<div class="a" style="left:828px;top:220px;width:15px;height:20px;background:linear-gradient(90deg,#faf7ea,#ede6c9)"></div>
<div class="a" style="left:828px;top:240px;width:15px;height:1px;background:#cfc5a0"></div>
<svg class="a" style="left:831px;top:225px" width="9" height="9"><defs><linearGradient id="gar" x1="0" y1="0" x2="0" y2="1"><stop offset="0" stop-color="#555"/><stop offset="1" stop-color="#9a9a9a"/></linearGradient></defs><path d="M4.5 1L8.5 8H0.5z" fill="url(#gar)"/></svg>
<div class="a" style="left:828px;top:285px;width:15px;height:16px;background:linear-gradient(90deg,#faf7ea,#ede6c9);border-top:1px solid #cfc5a0;border-bottom:1px solid #cfc5a0"></div>
<div class="a" style="left:833px;top:291px;width:6px;height:6px;border-radius:50%;background:radial-gradient(circle at 68% 68%,#f6f2e0 0,#f6f2e0 30%,#c9c3ad 62%,rgba(200,195,175,0) 100%)"></div>
<div class="a" style="left:828px;top:727px;width:15px;height:21px;background:linear-gradient(90deg,#faf7ea,#ede6c9);border-top:1px solid #cfc5a0"></div>
<svg class="a" style="left:831px;top:734px" width="9" height="9"><path d="M0.5 1H8.5L4.5 8z" fill="url(#gar)"/></svg>
<div class="a" style="left:19px;top:748px;width:824px;height:1px;background:#b9ad80"></div>
<div class="a" style="left:19px;top:749px;width:808px;height:15px;background:#f7f5ee"></div>
<div class="a" style="left:19px;top:749px;width:20px;height:15px;background:linear-gradient(#fbf9f1,#efeadb)"></div>
<div class="a" style="left:39px;top:749px;width:1px;height:15px;background:#ddd6bd"></div>
<svg class="a" style="left:24px;top:752px" width="9" height="9"><path d="M1 4.5L8 0.5V8.5z" fill="#c8c8c8"/></svg>
<div class="a" style="left:40px;top:749px;width:645px;height:15px;background:linear-gradient(#fbf8ea,#f1ebd2 50%,#e4dcb8);border-right:1px solid #cfc5a0"></div>
<div class="a" style="left:359px;top:754px;width:6px;height:6px;border-radius:50%;background:radial-gradient(circle at 68% 68%,#f6f2e0 0,#f6f2e0 30%,#c9c3ad 62%,rgba(200,195,175,0) 100%)"></div>
<div class="a" style="left:806px;top:749px;width:21px;height:15px;background:linear-gradient(#fbf8ec,#ece5c8);border-left:1px solid #cfc5a0"></div>
<svg class="a" style="left:812px;top:752px" width="9" height="9"><path d="M1 0.5L8 4.5L1 8.5z" fill="url(#gar)"/></svg>
<div class="a" style="left:827px;top:748px;width:1px;height:16px;background:#b9ad80"></div>
<div class="a" style="left:828px;top:749px;width:15px;height:15px;background:#f8f7f2"></div>
</body></html>
